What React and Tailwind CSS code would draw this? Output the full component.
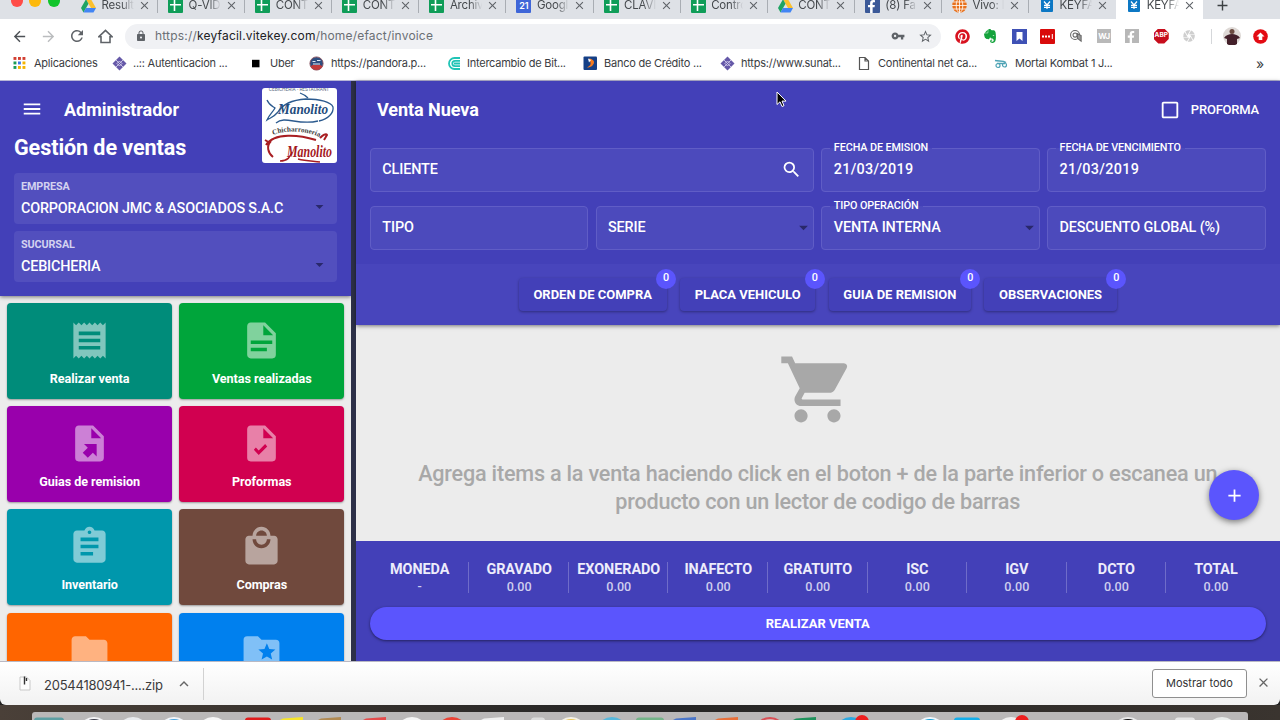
import { FaFacebookF, FaPinterest } from "react-icons/fa";
import {
  MdAdd,
  MdArrowBack,
  MdArrowDropDown,
  MdArrowForward,
  MdAssignment,
  MdCamera,
  MdCheckBoxOutlineBlank,
  MdClose,
  MdExpandLess,
  MdFolder,
  MdLocalMall,
  MdLock,
  MdMenu,
  MdReceipt,
  MdRefresh,
  MdSearch,
  MdShoppingCart,
  MdStarBorder,
  MdVpnKey,
} from "react-icons/md";
import { SiEvernote } from "react-icons/si";

const tabs = [
  { icon: "drive", title: "Result" },
  { icon: "sheet", title: "Q-VID" },
  { icon: "sheet", title: "CONT" },
  { icon: "sheet", title: "CONT" },
  { icon: "sheet", title: "Archiv" },
  { icon: "calendar", title: "Googl" },
  { icon: "sheet", title: "CLAVI" },
  { icon: "sheet", title: "Contro" },
  { icon: "drive", title: "CONT" },
  { icon: "facebook", title: "(8) Fa" },
  { icon: "globe", title: "Vivo: I" },
  { icon: "key", title: "KEYFA" },
  { icon: "key", title: "KEYFA", active: true },
];

const bookmarks = [
  { icon: "apps", label: "Aplicaciones", box: "w-[99px]", text: "ml-[21px]" },
  { icon: "sunat", label: "..:: Autenticacion ...", box: "w-[138px]", text: "ml-[21px]" },
  { icon: "uber", label: "Uber", box: "w-[59px]", text: "ml-[20px]" },
  { icon: "pandora", label: "https://pandora.p...", box: "w-[137px]", text: "ml-[22px]" },
  { icon: "bit", label: "Intercambio de Bit...", box: "w-[137px]", text: "ml-[21px]" },
  { icon: "bcp", label: "Banco de Crédito ...", box: "w-[137px]", text: "ml-[21px]" },
  { icon: "sunat", label: "https://www.sunat...", box: "w-[138px]", text: "ml-[21px]" },
  { icon: "page", label: "Continental net ca...", box: "w-[136px]", text: "ml-[20px]" },
  { icon: "kombat", label: "Mortal Kombat 1 J...", box: "w-[130px]", text: "ml-[21px]" },
];

const paths = {
  document:
    "M13,9H18.5L13,3.5V9M6,2H14L20,8V20A2,2 0 0,1 18,22H6C4.89,22 4,21.1 4,20V4C4,2.89 4.89,2 6,2M15,18V16H6V18H15M18,14V12H6V14H18Z",
  exportFile:
    "M6,2C4.89,2 4,2.9 4,4V20A2,2 0 0,0 6,22H18A2,2 0 0,0 20,20V8L14,2M13,3.5L18.5,9H13M8.93,12.22H16V19.29L13.88,17.17L11.05,20L8.22,17.17L11.05,14.35",
  checkFile:
    "M13,9V3.5L18.5,9M6,2C4.89,2 4,2.89 4,4V20A2,2 0 0,0 6,22H18A2,2 0 0,0 20,20V8L14,2M10.45,18.46L15.2,13.71L14.03,12.3L10.45,15.88L8.86,14.3L7.7,15.46",
  folderStar:
    "M20,6H12L10,4H4A2,2 0 0,0 2,6V18A2,2 0 0,0 4,20H20A2,2 0 0,0 22,18V8A2,2 0 0,0 20,6M17.94,17L15,15.28L12.06,17L12.84,13.67L10.25,11.43L13.66,11.14L15,8L16.34,11.14L19.75,11.43L17.16,13.67L17.94,17Z",
};

function PathIcon({ d }) {
  return (
    <svg viewBox="0 0 24 24" className="size-full" fill="currentColor" fillRule="evenodd">
      <path d={d} />
    </svg>
  );
}

const modules = [
  { label: "Realizar venta", color: "bg-[#008c7a]", icon: <MdReceipt className="size-full" /> },
  { label: "Ventas realizadas", color: "bg-[#00a53b]", icon: <PathIcon d={paths.document} /> },
  { label: "Guias de remision", color: "bg-[#9900ac]", icon: <PathIcon d={paths.exportFile} /> },
  { label: "Proformas", color: "bg-[#d10050]", icon: <PathIcon d={paths.checkFile} /> },
  { label: "Inventario", color: "bg-[#0097ac]", icon: <MdAssignment className="size-full" /> },
  { label: "Compras", color: "bg-[#70493d]", icon: <MdLocalMall className="size-full" /> },
  { color: "bg-[#ff6500]", icon: <MdFolder className="size-full" /> },
  { color: "bg-[#0080ee]", icon: <PathIcon d={paths.folderStar} /> },
];

const extras = ["ORDEN DE COMPRA", "PLACA VEHICULO", "GUIA DE REMISION", "OBSERVACIONES"];

const totals = [
  ["MONEDA", "-"],
  ["GRAVADO", "0.00"],
  ["EXONERADO", "0.00"],
  ["INAFECTO", "0.00"],
  ["GRATUITO", "0.00"],
  ["ISC", "0.00"],
  ["IGV", "0.00"],
  ["DCTO", "0.00"],
  ["TOTAL", "0.00"],
];

function TabIcon({ name }) {
  if (name === "drive") {
    return (
      <svg viewBox="0 0 24 24" className="size-[15px]">
        <path d="M8 2h8l8 14h-8z" fill="#fbc02d" />
        <path d="M8 2l4 7-8 14-4-7z" fill="#1fa463" />
        <path d="M8 16h16l-4 7H4z" fill="#4285f4" />
      </svg>
    );
  }
  if (name === "sheet") {
    return (
      <svg viewBox="0 0 15 15" className="size-[15px]">
        <rect width="15" height="15" rx="1" fill="#0f9d58" />
        <path d="M6.5 2v11M2 6.7h11" stroke="#fff" strokeWidth="1.6" />
      </svg>
    );
  }
  if (name === "calendar") {
    return (
      <span className="flex size-[15px] items-center justify-center rounded-[1px] bg-[#3f66d8] pt-[2px] text-[9px] font-semibold text-white">
        21
      </span>
    );
  }
  if (name === "facebook") {
    return (
      <span className="flex size-[15px] items-end justify-end rounded-[1px] bg-[#3b5998] pr-[2px] text-white">
        <FaFacebookF className="size-[13px]" />
      </span>
    );
  }
  if (name === "globe") {
    return (
      <svg viewBox="0 0 15 15" className="size-[15px]" fill="none" stroke="#fff" strokeWidth="0.8">
        <circle cx="7.5" cy="7.5" r="7.3" fill="#e8711c" stroke="none" />
        <ellipse cx="7.5" cy="7.5" rx="3.3" ry="7" />
        <path d="M7.5 0v15M0 7.5h15M1 4h13M1 11h13" />
      </svg>
    );
  }
  return (
    <svg viewBox="0 0 12 14" className="ml-[2px] h-[14px] w-[12px]">
      <rect width="12" height="14" rx="1" fill="#0d78c4" />
      <path d="M3 3.5l3 3.5 3-3.5M3 7.3h6M3 9.3h6M6 7v4" stroke="#fff" strokeWidth="1.2" fill="none" />
    </svg>
  );
}

function BookmarkIcon({ name }) {
  const shapes = {
    apps: (
      <>
        {["#d23f31", "#d23f31", "#d23f31", "#1a9c57", "#3b78e7", "#f4b400", "#1a9c57", "#f4b400", "#f4b400"].map(
          (fill, i) => (
            <rect key={i} x={0.5 + (i % 3) * 4.5} y={1 + Math.floor(i / 3) * 4.5} width="2.9" height="2.9" fill={fill} />
          ),
        )}
      </>
    ),
    sunat: (
      <>
        <path d="M7.5 0.5l7 7-7 7-7-7z" fill="#6558a8" />
        <path d="M4 4l7 7M11 4l-7 7M7.5 5l2.5 2.5-2.5 2.5L5 7.5z" stroke="#cfc9ea" strokeWidth="0.9" fill="none" />
      </>
    ),
    uber: <rect x="2" y="3.8" width="7.5" height="7.5" fill="#000" />,
    pandora: (
      <>
        <circle cx="7.5" cy="7.5" r="6.6" fill="#2e4e80" stroke="#8d5560" strokeWidth="0.9" />
        <path d="M1.5 10.5a7 7 0 0 0 12 0l-2-1.5h-8z" fill="#c13a3a" />
        <path d="M3.5 5.5h3M8 4.5h3.5M4 8h7" stroke="#dfe7f2" strokeWidth="1.2" />
      </>
    ),
    bit: (
      <path
        d="M14 2H8.500a5.500 5.500 0 0 0 0 11H14M14 4.800H9a2.700 2.700 0 0 0 0 5.400h5M14 7.500H8"
        stroke="#20c4b6"
        strokeWidth="1.800"
        fill="none"
      />
    ),
    bcp: (
      <>
        <rect x="0.5" y="0.5" width="13.5" height="13.5" rx="1" fill="#143f86" />
        <path d="M6 2.500c5 .5 6.500 4 3.500 7-1.500 1.500-3.500 2-5.500 2 3-1.500 4-3 3.500-5z" fill="#f47a20" />
        <path d="M5 2.500l3 1.500-2 2.500z" fill="#fff" />
      </>
    ),
    page: <path d="M1.500 1.500h5.500l3.500 3.500v8.500h-9zM7 1.500v3.500h3.500" stroke="#555" strokeWidth="1.2" fill="none" />,
    kombat: (
      <>
        <path d="M1 4.500c4 1 8-.5 11 2M3 7.500h8" stroke="#4ea3b5" strokeWidth="1.5" fill="none" />
        <circle cx="4" cy="9.500" r="2" stroke="#4ea3b5" strokeWidth="1.2" fill="none" />
        <circle cx="10.500" cy="9" r="2" stroke="#4ea3b5" strokeWidth="1.2" fill="none" />
      </>
    ),
  };

  return (
    <svg viewBox="0 0 15 15" className="absolute left-0 size-[15px]">
      {shapes[name]}
    </svg>
  );
}

function TabStrip() {
  return (
    <div className="flex h-[19px] shrink-0 items-end overflow-hidden bg-[#dee1e6]">
      <div className="flex h-[37px] w-[71px] shrink-0 items-center gap-[6.5px] pl-[10.5px]">
        <span className="size-[12px] rounded-full bg-[#ff4c47]" />
        <span className="size-[12px] rounded-full bg-[#fdb90c]" />
        <span className="size-[12px] rounded-full bg-[#11c52b]" />
      </div>
      {tabs.map((tab, index) => (
        <div
          key={index}
          className={`flex h-[28px] w-[87.1px] shrink-0 items-center pl-[10px] ${
            tab.active ? "rounded-t-lg bg-white" : ""
          }`}
        >
          <span className="w-[20.5px]">
            <TabIcon name={tab.icon} />
          </span>
          <span className="w-[35px] [mask-image:linear-gradient(to_right,#000_55%,transparent_92%)] pt-px text-[11.5px] tracking-[-0.2px] whitespace-nowrap text-[#45494d]">
            {tab.title}
          </span>
          <MdClose className="ml-px size-[13px] text-[#5f6368]" />
          {tab.active || tabs[index + 1]?.active ? null : (
            <span className="mb-[2px] ml-auto h-[18px] w-px bg-[#a9adb3]" />
          )}
        </div>
      ))}
      <div className="flex h-[28px] items-center pl-[11px]">
        <MdAdd className="size-[17px] text-[#3c4043]" />
      </div>
    </div>
  );
}

function Toolbar() {
  return (
    <div className="flex h-[34px] shrink-0 items-center bg-white text-[#5f6368]">
      <div className="flex w-[125px] items-center gap-[11.5px] pl-[11px]">
        <MdArrowBack className="size-[17px] text-[#4d5156]" />
        <MdArrowForward className="size-[17px] text-[#babcbe]" />
        <MdRefresh className="size-[18px]" />
        <svg viewBox="0 0 16 16" className="size-[15px]" fill="none" stroke="currentColor" strokeWidth="1.7">
          <path d="M1 8.200L8 1.500l7 6.700H12.800v6.200H3.200V8.200z" />
        </svg>
      </div>
      <div className="flex h-[25px] w-[816px] items-center rounded-full bg-[#f0f1f4] pr-[8px] pl-[9.5px]">
        <MdLock className="size-[12px]" />
        <span className="ml-[8.5px] flex-1 text-[12px] tracking-[0.19px] text-[#6b6f74]">
          https://<span className="text-[#202124]">keyfacil.vitekey.com</span>/home/efact/invoice
        </span>
        <MdVpnKey className="size-[14px]" />
        <MdStarBorder className="ml-[13px] size-[15px]" />
      </div>
      <div className="flex flex-1 items-center pl-[14px]">
        <span className="flex w-[28.4px]">
          <FaPinterest className="size-[15px] text-[#d8121f]" />
        </span>
        <span className="flex w-[28.4px]">
          <SiEvernote className="size-[14px] text-[#14a33c]" />
        </span>
        <span className="flex w-[28.4px]">
          <svg viewBox="0 0 15 15" className="size-[15px]">
            <rect width="15" height="15" fill="#3f51b5" />
            <path d="M4.500 3h6v9l-3-2.500-3 2.500z" fill="#fff" />
          </svg>
        </span>
        <span className="flex w-[28.4px]">
          <svg viewBox="0 0 15 15" className="size-[15px]">
            <rect width="15" height="15" rx="1" fill="#d90b0b" />
            <path d="M2 7.500h8" stroke="#fff" strokeWidth="2" strokeDasharray="2 1" />
            <path d="M12.300 5v5" stroke="#fff" strokeWidth="1" />
          </svg>
        </span>
        <span className="flex w-[28.4px]">
          <svg viewBox="0 0 15 15" className="size-[14px]" fill="none" stroke="#666" strokeWidth="1.1">
            <circle cx="6.5" cy="6.5" r="4.8" />
            <circle cx="6.5" cy="6.5" r="2.2" />
            <path d="M9 5v5l4 3V7z" fill="#999" />
          </svg>
        </span>
        <span className="flex w-[28.4px]">
          <span className="flex size-[14px] items-center justify-center bg-[#b9b9b9] text-[8px] font-bold tracking-[-0.5px] text-white">
            WJ
          </span>
        </span>
        <span className="flex w-[28.4px]">
          <span className="flex size-[14px] items-end justify-end bg-[#b7b7b7] pr-[2px] text-white">
            <FaFacebookF className="size-[12px]" />
          </span>
        </span>
        <span className="flex w-[28.4px]">
          <span className="flex size-[15px] items-center justify-center bg-[#c70d1c] text-[6.5px] font-bold text-white [clip-path:polygon(30%_0,70%_0,100%_30%,100%_70%,70%_100%,30%_100%,0_70%,0_30%)]">
            ABP
          </span>
        </span>
        <span className="flex w-[28.4px]">
          <MdCamera className="size-[14px] text-[#cfcfcf]" />
        </span>
        <span className="mr-[5px] h-[15px] w-px bg-[#d5d7da]" />
        <svg viewBox="0 0 18 18" className="ml-[6px] size-[18px]">
          <circle cx="9" cy="9" r="9" fill="#ded9d6" />
          <circle cx="9" cy="4.5" r="2.5" fill="#6a4a40" />
          <path d="M1 11c2-3 5-4 8-4s6 1 8 4l-3 1v5a9 9 0 0 1-10 0v-5z" fill="#43202a" />
        </svg>
        <svg viewBox="0 0 15 15" className="ml-[12px] size-[15px]">
          <circle cx="7.5" cy="7.5" r="7.3" fill="#e30b13" />
          <path d="M7.500 3.500l4 4H9.300v3.500H5.700V7.500H3.500z" fill="#fff" />
        </svg>
      </div>
    </div>
  );
}

function BookmarksBar() {
  return (
    <div className="flex h-[27px] shrink-0 items-center bg-white pb-[6px] pl-[13px] text-[11px] tracking-[-0.24px] text-[#3a3c3f]">
      {bookmarks.map((item, index) => (
        <div key={index} className={`relative flex h-[20px] shrink-0 items-center whitespace-nowrap ${item.box}`}>
          <BookmarkIcon name={item.icon} />
          <span className={item.text}>{item.label}</span>
        </div>
      ))}
      <span className="ml-auto pr-[16px] text-[14px] leading-none">»</span>
    </div>
  );
}

function Logo() {
  return (
    <svg viewBox="0 0 75 75" className="size-[75px] rounded-[3px] bg-white">
      <text x="37" y="3" textAnchor="middle" fontSize="4.8" fill="#56677e" fontFamily="Roboto">
        CEBICHERIA - RESTAURANT
      </text>
      <g fill="none" stroke="#2b5a8e" strokeWidth="1.3">
        <path d="M5 12c2 5 5 6 8 8-2 4-6 7-8 12 3-2 7-3 11-8 4-7 14-12 28-13 14 0 25 3 27 8 1 6-5 12-14 14" />
        <path d="M38 5c3 1 6 3 8 5M14 35c9-8 22 3 42-2" />
      </g>
      <text
        x="16"
        y="26"
        fontSize="15"
        fontStyle="italic"
        fontWeight="700"
        fill="#234b7c"
        fontFamily="Liberation Serif, serif"
        textLength="50"
        lengthAdjust="spacingAndGlyphs"
      >
        Manolito
      </text>
      <path id="logo-arc" d="M11 47Q32 39 58 49" fill="none" />
      <text fontSize="7.2" fontWeight="700" fill="#3b3b3b" fontFamily="Liberation Serif, serif">
        <textPath href="#logo-arc">Chicharronería</textPath>
      </text>
      <g fill="none" stroke="#a81e22" strokeWidth="2">
        <path d="M4 57c8-13 34-10 50-5M9 53c-5 5-3 12 2 16M3 52l5 3M58 50c3-3 6-5 7-3l-3 5" />
        <path d="M18 73c8 0 10-4 12-9M36 71c8 2 14 2 22 3" strokeWidth="1.5" />
      </g>
      <text
        x="25"
        y="69"
        fontSize="16"
        fontStyle="italic"
        fontWeight="700"
        fill="#a3171c"
        fontFamily="Liberation Serif, serif"
        textLength="45"
        lengthAdjust="spacingAndGlyphs"
      >
        Manolito
      </text>
    </svg>
  );
}

function SideSelect({ label, value }) {
  return (
    <div className="flex h-[51px] items-center rounded-[4px] bg-[#524fbe] pr-[8px] pl-[7px]">
      <div className="flex-1 pt-px">
        <div className="text-[10.8px] leading-[14px] font-bold tracking-[-0.1px] text-[#d3d2f0]">{label}</div>
        <div className="mt-[6px] text-[14.4px] leading-[18px] font-medium tracking-[-0.18px] text-white">{value}</div>
      </div>
      <MdArrowDropDown className="mt-[15px] size-[19px] text-[#29286b]" />
    </div>
  );
}

function Sidebar() {
  return (
    <aside className="flex w-[351px] shrink-0 flex-col overflow-hidden bg-[#ececec]">
      <header className="relative flex h-[215px] shrink-0 flex-col bg-[#4340b8] px-[14px] pt-[7px] shadow-[0_1px_4px_rgba(0,0,0,0.5)]">
        <div className="flex h-[75px] justify-between">
          <div>
            <div className="flex h-[42px] items-center pl-[7px] text-white">
              <MdMenu className="size-[22px]" />
              <span className="ml-[21px] text-[18px] font-bold tracking-[-0.05px]">Administrador</span>
            </div>
            <h1 className="mt-px text-[21.6px] leading-[34px] font-bold tracking-[-0.1px] text-white">
              Gestión de ventas
            </h1>
          </div>
          <Logo />
        </div>
        <div className="mt-[10px] flex flex-col gap-[7px]">
          <SideSelect label="EMPRESA" value="CORPORACION JMC & ASOCIADOS S.A.C" />
          <SideSelect label="SUCURSAL" value="CEBICHERIA" />
        </div>
      </header>
      <div className="grid grid-cols-2 gap-[7.2px] py-[7px] pr-[6.8px] pl-[7.2px]">
        {modules.map((item) => (
          <div
            key={item.color}
            className={`flex h-[96px] flex-col items-center rounded-[4px] pt-[16px] shadow-[0_1px_2px_rgba(0,0,0,0.35)] ${item.color}`}
          >
            <span className="size-[43px] text-white/50">{item.icon}</span>
            {item.label ? (
              <span className="mt-[8px] text-[12.6px] leading-[18px] font-bold tracking-[-0.05px] text-white">
                {item.label}
              </span>
            ) : null}
          </div>
        ))}
      </div>
    </aside>
  );
}

function Field({ label, value, className = "", valueClass = "tracking-[-0.12px]", children }) {
  return (
    <div className={`relative flex h-[43.5px] items-center justify-between pl-[12.4px] text-white ${className}`}>
      {label ? (
        <fieldset className="absolute inset-x-0 -top-[6px] bottom-0 rounded-[4px] border border-[#605dc6] bg-white/5 pl-[7.5px]">
          <legend className="px-[4px] text-[10.8px] leading-[12px] font-medium tracking-[-0.1px]">{label}</legend>
        </fieldset>
      ) : (
        <div className="absolute inset-0 rounded-[4px] border border-[#605dc6] bg-white/5" />
      )}
      <span className={`relative mt-px text-[14.4px] font-medium ${valueClass}`}>{value}</span>
      {children}
    </div>
  );
}

function InvoiceHeader() {
  return (
    <header className="relative z-10 flex h-[244px] shrink-0 flex-col bg-[#4340b8] shadow-[0_1px_4px_rgba(0,0,0,0.5)]">
      <div className="flex h-[57px] items-center justify-between pr-[21px] pl-[21.5px] text-white">
        <h2 className="text-[18px] font-bold tracking-[-0.05px]">Venta Nueva</h2>
        <label className="flex items-center gap-[10px] text-[12.96px] font-medium tracking-[-0.18px]">
          <MdCheckBoxOutlineBlank className="size-[22px]" />
          PROFORMA
        </label>
      </div>
      <div className="mt-[10px] grid grid-cols-4 gap-x-[7.2px] gap-y-[14.5px] px-[14.4px]">
        <Field value="CLIENTE" className="col-span-2 pr-[12px]">
          <MdSearch className="relative size-[21px]" />
        </Field>
        <Field label="FECHA DE EMISION" value="21/03/2019" valueClass="tracking-[0.3px]" />
        <Field label="FECHA DE VENCIMIENTO" value="21/03/2019" valueClass="tracking-[0.3px]" />
        <Field value="TIPO" />
        <Field value="SERIE">
          <MdArrowDropDown className="relative size-[21px] text-[#29286b]" />
        </Field>
        <Field label="TIPO OPERACIÓN" value="VENTA INTERNA">
          <MdArrowDropDown className="relative size-[21px] text-[#29286b]" />
        </Field>
        <Field value="DESCUENTO GLOBAL (%)" />
      </div>
      <div className="mt-auto flex h-[61px] justify-center gap-[13.5px] bg-[#4845bc] pt-[14px]">
        {extras.map((label) => (
          <button
            key={label}
            className="relative h-[33px] rounded-[4px] bg-[#4340b8] px-[14.6px] text-[12.96px] font-bold tracking-[0.02px] text-white shadow-[0_1px_3px_rgba(0,0,0,0.35)]"
          >
            {label}
            <span className="absolute -top-[9.5px] -right-[9.5px] flex size-[20px] items-center justify-center rounded-full bg-[#5b55fd] text-[10.8px] font-medium tracking-normal">
              0
            </span>
          </button>
        ))}
      </div>
    </header>
  );
}

function Invoice() {
  return (
    <main className="relative flex min-w-0 flex-1 flex-col bg-[#ececec]">
      <InvoiceHeader />
      <section className="flex h-[216px] flex-col items-center pt-[25px] text-[#a8a8a8]">
        <MdShoppingCart className="size-[79px]" />
        <p className="mt-[31px] w-[830px] text-center text-[21.6px] leading-[28px] font-medium tracking-[-0.2px]">
          Agrega items a la venta haciendo click en el boton + de la parte inferior o escanea un
          <br />
          producto con un lector de codigo de barras
        </p>
      </section>
      <button className="absolute top-[389px] right-[21px] z-10 flex size-[50px] items-center justify-center rounded-full bg-[#5b55fd] text-white shadow-[0_2px_6px_rgba(0,0,0,0.5)]">
        <MdAdd className="size-[21px]" />
      </button>
      <footer className="flex-1 bg-[#4340b8] px-[14.4px] pt-[21px]">
        <div className="flex h-[31px]">
          {totals.map(([label, value]) => (
            <div
              key={label}
              className="flex flex-1 flex-col items-center border-r border-[#6f6cc9] text-center last:border-transparent"
            >
              <span className="pl-px text-[14.4px] leading-[15px] font-bold tracking-[-0.05px] text-[#edecfb]">
                {label}
              </span>
              <span className="mt-[2px] pl-px text-[12.6px] leading-[15px] font-medium text-[#cfceee]">{value}</span>
            </div>
          ))}
        </div>
        <button className="mt-[14px] h-[33px] w-full rounded-full bg-[#5b55fd] text-[12.96px] font-bold text-white shadow-[0_1px_3px_rgba(0,0,0,0.5)]">
          REALIZAR VENTA
        </button>
      </footer>
      <svg viewBox="0 0 12 18" className="absolute top-[10px] left-[420px] z-20 h-[18px] w-[12px]">
        <path
          d="M1 1v12.500l3-2.700 2 4.700 2-.9-2-4.500h4z"
          fill="#000"
          stroke="#fff"
          strokeWidth="1"
          strokeLinejoin="round"
        />
      </svg>
    </main>
  );
}

function DownloadBar() {
  return (
    <div className="relative flex h-[44px] shrink-0 items-center rounded-b-[6px] border-t border-[#b9b9c4] bg-gradient-to-b from-white to-[#f2f2f2]">
      <svg viewBox="0 0 12 15" className="ml-[19px] h-[15px] w-[12px]">
        <path d="M1 1h6.500l3.500 3.500V14H1z" fill="#fdfdfd" stroke="#c3c3c3" strokeWidth="0.9" />
        <path d="M5.500 0.500v8M7.500 2v3" stroke="#333" strokeWidth="1.4" />
      </svg>
      <span className="mt-[4px] ml-[13px] w-[120px] text-[13px] tracking-[-0.22px] whitespace-nowrap text-[#3b3b3b]">
        20544180941-....zip
      </span>
      <MdExpandLess className="ml-[11px] size-[18px] text-[#666]" />
      <span className="ml-[10px] h-[32px] w-px bg-[#d2d2d2]" />
      <button className="ml-auto h-[29px] w-[95px] rounded-[3px] border border-[#8f8f8f] bg-white text-[11px] text-[#333]">
        Mostrar todo
      </button>
      <MdClose className="mr-[9px] mb-[2px] ml-[9px] size-[15px] text-[#666]" />
    </div>
  );
}

const dockIcons = [
  { x: 17, fill: "#5e9fa3", w: 30 },
  { x: 62, fill: "#f4f4f6", round: true, inner: "#3d3d4a" },
  { x: 101, fill: "#e9ebee", round: true },
  { x: 142, fill: "#f3f6fa", round: true, inner: "#49a2dc" },
  { x: 181, fill: "#f6f6f6", round: true },
  { x: 226, fill: "#e01b1b", w: 26 },
  { x: 261, fill: "#f7e52a", tilt: true },
  { x: 299, fill: "#b18a52", tilt: true },
  { x: 344, fill: "#e44b4b", tilt: true },
  { x: 380, fill: "#f5f5f5", round: true },
  { x: 420, fill: "#ea4335", round: true },
  { x: 462, fill: "#f0f0f0", tilt: true },
  { x: 506, fill: "#dcdcdc", w: 14 },
  { x: 539, fill: "#f5f2e8", round: true, inner: "#e8c65b" },
  { x: 580, fill: "#57b8dc", round: true },
  { x: 618, fill: "#74b489", w: 28 },
  { x: 654, fill: "#4a76c9", tilt: true },
  { x: 696, fill: "#e8703a", tilt: true },
  { x: 738, fill: "#d94f56", round: true, inner: "#d9b4b4" },
  { x: 774, fill: "#20925c", tilt: true },
  { x: 819, fill: "#2ca9e1", round: true, badge: true },
  { x: 898, fill: "#f1f7fb", round: true, inner: "#18a0d8" },
  { x: 935, fill: "#14aeea", w: 26 },
  { x: 979, fill: "#f0f0f0", round: true, badge: true },
  { x: 1096, fill: "#eaeaea", round: true, inner: "#111" },
  { x: 1153, fill: "#e6e6e6", w: 20 },
  { x: 1190, fill: "#e9eceb", round: true },
];

function Dock() {
  return (
    <div className="flex h-[15px] shrink-0 items-end justify-center bg-gradient-to-r from-[#4a4038] via-[#252525] to-[#3a342f]">
      <svg viewBox="0 0 1216 8" className="h-[8px] w-[1216px] rounded-t-[3px] bg-[#bab8b8]">
        {dockIcons.map((icon) => (
          <g key={icon.x}>
            {icon.round ? (
              <>
                <circle cx={icon.x} cy="21" r="16" fill={icon.fill} />
                {icon.inner ? <circle cx={icon.x} cy="21" r="14" fill={icon.inner} /> : null}
              </>
            ) : icon.tilt ? (
              <path d={`M${icon.x - 13} 8l3-1.500 20-1.500v3z`} fill={icon.fill} />
            ) : (
              <rect x={icon.x - icon.w / 2} y="5.5" width={icon.w} height="8" rx="3" fill={icon.fill} />
            )}
            {icon.badge ? <circle cx={icon.x + 11} cy="10" r="7" fill="#ee1f1f" /> : null}
          </g>
        ))}
      </svg>
    </div>
  );
}

export default function App() {
  return (
    <div className="flex h-[720px] w-[1280px] flex-col overflow-hidden bg-[#222] font-[Inter,sans-serif]">
      <TabStrip />
      <Toolbar />
      <BookmarksBar />
      <div className="h-px shrink-0 bg-[#b7b6d6]" />
      <div className="flex h-[580px] shrink-0 font-[Roboto,sans-serif]">
        <Sidebar />
        <div className="w-[4.5px] shrink-0 bg-[#2d3048]" />
        <Invoice />
      </div>
      <DownloadBar />
      <Dock />
    </div>
  );
}
